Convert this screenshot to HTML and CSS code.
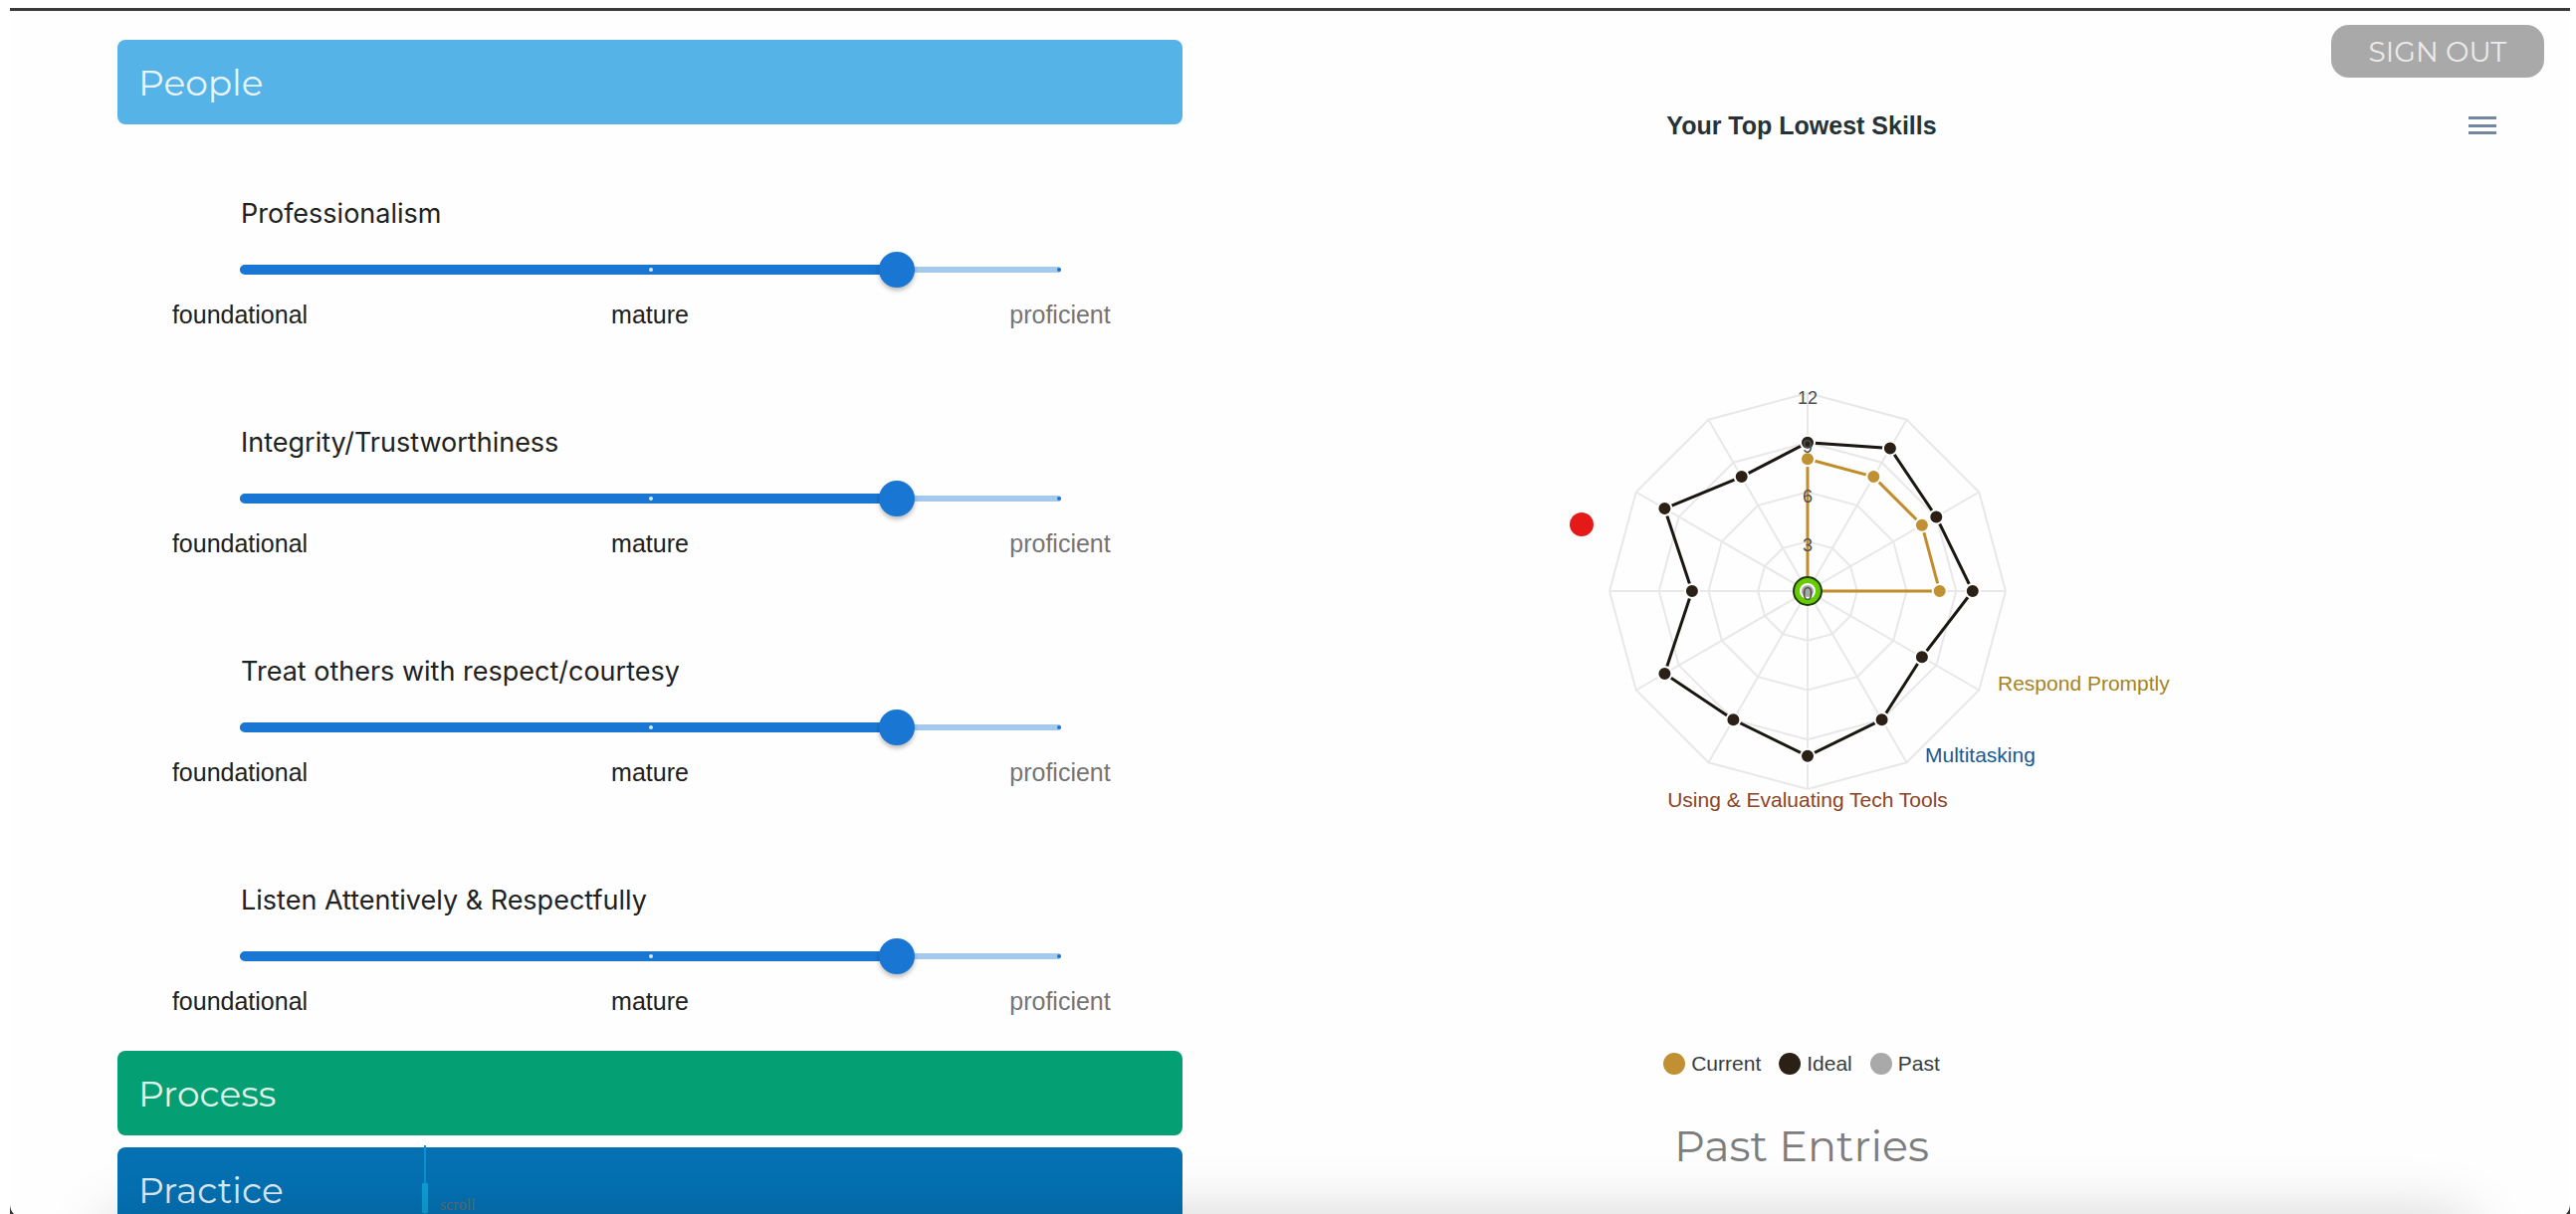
FILE: index.html
```html
<!DOCTYPE html>
<html lang="en">
<head>
<meta charset="utf-8">
<title>Skills assessment</title>
<link rel="stylesheet" href="styles.css">
</head>
<body>
<div class="window">
  <main class="page">
    <section class="skills">
      <button class="bar bar-people" type="button" aria-expanded="true">People</button>
      <div class="skill-list">
        <div class="skill">
          <label class="skill-name" for="s1">Professionalism</label>
          <div class="slider">
            <span class="rail"></span><span class="fill" style="width:80%"></span>
            <span class="ticks"><i></i><i></i><i></i></span>
            <input id="s1" type="range" min="0" max="10" value="8">
          </div>
          <div class="marks"><span>foundational</span><span>mature</span><span class="off">proficient</span></div>
        </div>
        <div class="skill">
          <label class="skill-name" for="s2">Integrity/Trustworthiness</label>
          <div class="slider">
            <span class="rail"></span><span class="fill" style="width:80%"></span>
            <span class="ticks"><i></i><i></i><i></i></span>
            <input id="s2" type="range" min="0" max="10" value="8">
          </div>
          <div class="marks"><span>foundational</span><span>mature</span><span class="off">proficient</span></div>
        </div>
        <div class="skill">
          <label class="skill-name" for="s3">Treat others with respect/courtesy</label>
          <div class="slider">
            <span class="rail"></span><span class="fill" style="width:80%"></span>
            <span class="ticks"><i></i><i></i><i></i></span>
            <input id="s3" type="range" min="0" max="10" value="8">
          </div>
          <div class="marks"><span>foundational</span><span>mature</span><span class="off">proficient</span></div>
        </div>
        <div class="skill">
          <label class="skill-name" for="s4">Listen Attentively &amp; Respectfully</label>
          <div class="slider">
            <span class="rail"></span><span class="fill" style="width:80%"></span>
            <span class="ticks"><i></i><i></i><i></i></span>
            <input id="s4" type="range" min="0" max="10" value="8">
          </div>
          <div class="marks"><span>foundational</span><span>mature</span><span class="off">proficient</span></div>
        </div>
      </div>
      <button class="bar bar-process" type="button">Process</button>
      <div class="practice">
        <button class="bar bar-practice" type="button">Practice</button>
        <div class="scroll-hint"><span class="scroll-line"></span><span class="scroll-text">scroll</span></div>
      </div>
    </section>

    <section class="report">
      <div class="account"><button class="sign-out" type="button">SIGN OUT</button></div>
      <div class="chart-head">
        <h2 class="chart-title">Your Top Lowest Skills</h2>
        <button class="menu" type="button" aria-label="Chart menu">
          <svg width="28" height="19" viewBox="0 0 28 19"><path d="M0 0h28v3H0zM0 8h28v3H0zM0 15h28v3H0z" fill="#7388a0"/></svg>
        </button>
      </div>
      <div class="chart-body">
        <svg class="radar" viewBox="0 0 1244 908" role="img" aria-label="Radar chart of current, ideal and past skills">
          <g transform="translate(628 448)">
            <g class="grid">
              <polygon points="0,-199 99.5,-172.3 172.3,-99.5 199,0 172.3,99.5 99.5,172.3 0,199 -99.5,172.3 -172.3,99.5 -199,0 -172.3,-99.5 -99.5,-172.3"/>
              <polygon points="0,-149.3 74.6,-129.3 129.3,-74.6 149.3,0 129.3,74.6 74.6,129.3 0,149.3 -74.6,129.3 -129.3,74.6 -149.3,0 -129.3,-74.6 -74.6,-129.3"/>
              <polygon points="0,-99.5 49.8,-86.2 86.2,-49.8 99.5,0 86.2,49.8 49.8,86.2 0,99.5 -49.8,86.2 -86.2,49.8 -99.5,0 -86.2,-49.8 -49.8,-86.2"/>
              <polygon points="0,-49.8 24.9,-43.1 43.1,-24.9 49.8,0 43.1,24.9 24.9,43.1 0,49.8 -24.9,43.1 -43.1,24.9 -49.8,0 -43.1,-24.9 -24.9,-43.1"/>
              <path d="M0-199V199M-199 0H199M-99.5-172.3L99.5 172.3M-172.3-99.5L172.3 99.5M-172.3 99.5L172.3-99.5M-99.5 172.3L99.5-172.3"/>
            </g>
            <polygon class="line ideal" points="0,-149.3 82.9,-143.6 129.3,-74.6 165.8,0 114.9,66.3 74.6,129.3 0,165.8 -74.6,129.3 -143.6,82.9 -116.1,0 -143.6,-82.9 -66.3,-114.9"/>
            <polygon class="line current" points="0,0 0,-132.7 66.3,-114.9 114.9,-66.3 132.7,0"/>
            <g class="dots dots-ideal">
              <circle cx="0" cy="-149.3" r="7"/><circle cx="82.9" cy="-143.6" r="7"/><circle cx="129.3" cy="-74.6" r="7"/><circle cx="165.8" cy="0" r="7"/><circle cx="114.9" cy="66.3" r="7"/><circle cx="74.6" cy="129.3" r="7"/><circle cx="0" cy="165.8" r="7"/><circle cx="-74.6" cy="129.3" r="7"/><circle cx="-143.6" cy="82.9" r="7"/><circle cx="-116.1" cy="0" r="7"/><circle cx="-143.6" cy="-82.9" r="7"/><circle cx="-66.3" cy="-114.9" r="7"/>
            </g>
            <g class="dots dots-current">
              <circle cx="0" cy="-132.7" r="7"/><circle cx="66.3" cy="-114.9" r="7"/><circle cx="114.9" cy="-66.3" r="7"/><circle cx="132.7" cy="0" r="7"/>
            </g>
            <circle r="14" fill="#66cc00" stroke="#1f3a0c" stroke-width="2"/>
            <circle r="8" fill="#fff"/>
            <circle r="6" fill="#a9a9a9"/>
            <g class="scale">
              <text y="-188">12</text><text y="-139">9</text><text y="-89">6</text><text y="-40">3</text><text y="9">0</text>
            </g>
            <g class="axis">
              <text x="191" y="100" fill="#a5841f">Respond Promptly</text>
              <text x="118" y="172" fill="#1b5a8e">Multitasking</text>
              <text x="0" y="217" fill="#8a4526" text-anchor="middle">Using &amp; Evaluating Tech Tools</text>
            </g>
          </g>
          <circle cx="401" cy="381" r="12" fill="#e61919"/>
        </svg>
        <ul class="legend">
          <li><i class="key key-current"></i>Current</li>
          <li><i class="key key-ideal"></i>Ideal</li>
          <li><i class="key key-past"></i>Past</li>
        </ul>
        <h2 class="entries">Past Entries</h2>
      </div>
    </section>
  </main>
  <div class="shade"></div>
  <svg class="corner corner-left" viewBox="0 0 4 10"><path d="M0 0Q0 6 4 10H0z"/></svg>
  <svg class="corner corner-right" viewBox="0 0 4 10"><path d="M4 0Q4 6 0 10H4z"/></svg>
</div>
</body>
</html>
```
FILE: styles.css
```css
* { box-sizing: border-box; }

body {
  margin: 0;
  background: #fff;
  font-family: "Liberation Sans", Arial, sans-serif;
  color: #212121;
}

button { border: 0; cursor: pointer; }

.window {
  position: relative;
  height: 100vh;
  padding: 8px 6px 0 10px;
  overflow: hidden;
}

.page {
  display: grid;
  grid-template-columns: 1070fr 1394fr;
  height: 100%;
  padding-left: 4.2%;
  border-top: 3px solid #3a3a3a;
  background: #fefefe;
  overflow-y: auto;
  scrollbar-width: none;
}

/* Accordion */
.skills { padding-top: 29px; }

.bar {
  display: block;
  width: 100%;
  height: 85px;
  padding: 0 21px;
  border-radius: 8px;
  color: rgba(255, 255, 255, 0.88);
  font: 400 36px/44px Montserrat, Inter, sans-serif;
  text-align: left;
}
.bar-people { background: #55b3e8; }
.bar-process { background: #049f73; }
.bar-practice { background: #0571b3; }

.skill-list {
  display: grid;
  gap: 98px;
  padding: 74px 0 35px;
}

.skill-name {
  display: block;
  margin: 0 124px 22px;
  font: 400 27px/32px Inter, sans-serif;
}

.slider {
  display: grid;
  align-items: center;
  height: 36px;
  margin: 0 122px 0 123px;
}
.slider > * { grid-area: 1 / 1; }
.rail {
  height: 6px;
  border-radius: 3px;
  background: #a3c9ed;
}
.fill {
  height: 10px;
  border-radius: 5px;
  background: #1976d2;
}
.ticks {
  display: flex;
  justify-content: space-between;
}
.ticks i {
  width: 4px;
  height: 4px;
  border-radius: 2px;
  background: #d5e6f7;
}
.ticks i:first-child { background: #1976d2; }
.ticks i:last-child { background: #1976d2; }

.slider input {
  width: calc(100% + 36px);
  height: 36px;
  margin: 0 -18px;
  background: none;
  appearance: none;
  -webkit-appearance: none;
}
.slider input::-webkit-slider-thumb {
  width: 36px;
  height: 36px;
  border-radius: 50%;
  background: #1976d2;
  box-shadow: 0 3px 4px rgba(0, 0, 0, 0.25);
  appearance: none;
  -webkit-appearance: none;
}

.marks {
  display: flex;
  justify-content: space-between;
  padding: 12px 43px 0;
  font-size: 25px;
  line-height: 30px;
  text-align: center;
}
.marks span { width: 160px; }
.marks .off { color: #757575; }

.practice {
  position: relative;
  margin-top: 12px;
}
.scroll-hint {
  position: absolute;
  top: -2px;
  left: 306px;
  display: flex;
  align-items: flex-end;
  gap: 12px;
  height: 69px;
}
.scroll-line {
  width: 6px;
  height: 100%;
  background:
    linear-gradient(#0a9fd5, #0a9fd5) center 38px / 6px 30px no-repeat,
    linear-gradient(#0a93cd, #0a93cd) center / 2px 100% no-repeat;
}
.scroll-text {
  color: #5b6c77;
  font: 16px/18px "Liberation Serif", serif;
}

/* Report */
.report { padding-top: 14px; }

.account {
  display: flex;
  justify-content: flex-end;
  padding-right: 26px;
}
.sign-out {
  width: 214px;
  height: 53px;
  border-radius: 18px;
  background: #a9a9a9;
  color: #ececec;
  font: 400 28px/32px Montserrat, Inter, sans-serif;
}

.chart-head {
  display: grid;
  grid-template-columns: 1fr 150px;
  align-items: center;
  height: 40px;
  margin-top: 28px;
}
.chart-title {
  margin: 0;
  color: #263238;
  font-size: 25px;
  line-height: 30px;
  text-align: center;
}
.menu {
  display: flex;
  justify-self: start;
  margin-left: 48px;
  padding: 0;
  background: none;
}

.chart-body { padding-right: 150px; }
.radar { display: block; width: 100%; }

.grid { fill: none; stroke: #e8e8e8; stroke-width: 2; }
.line { fill: none; stroke-width: 3; }
.ideal { stroke: #1a1611; }
.current { stroke: #c08c2c; }
.dots { stroke: #fff; stroke-width: 2; }
.dots-ideal { fill: #2a2015; }
.dots-current { fill: #c19033; }
.scale {
  fill: #4a5154;
  font-size: 18px;
  text-anchor: middle;
}
.axis { font-size: 21px; }

.legend {
  display: flex;
  justify-content: center;
  gap: 18px;
  margin: 0;
  padding: 0;
  color: #373d3f;
  font-size: 21px;
  line-height: 30px;
  list-style: none;
}
.legend li {
  display: flex;
  align-items: center;
  gap: 6px;
}
.key {
  width: 22px;
  height: 22px;
  border-radius: 50%;
}
.key-current { background: #c19033; }
.key-ideal { background: #2a2015; }
.key-past { background: #a9a9a9; }

.entries {
  margin: 38px 0 0;
  color: #7d7d7d;
  font: 400 43px/60px Montserrat, Inter, sans-serif;
  text-align: center;
}

/* Window edge */
.shade {
  position: absolute;
  right: 110px;
  bottom: -106px;
  left: 110px;
  height: 100px;
  box-shadow: 0 0 64px rgba(0, 0, 0, 0.2);
  pointer-events: none;
}
.corner {
  position: absolute;
  bottom: 0;
  width: 4px;
  height: 10px;
  fill: #333;
}
.corner-left { left: 10px; }
.corner-right { right: 6px; }
```
